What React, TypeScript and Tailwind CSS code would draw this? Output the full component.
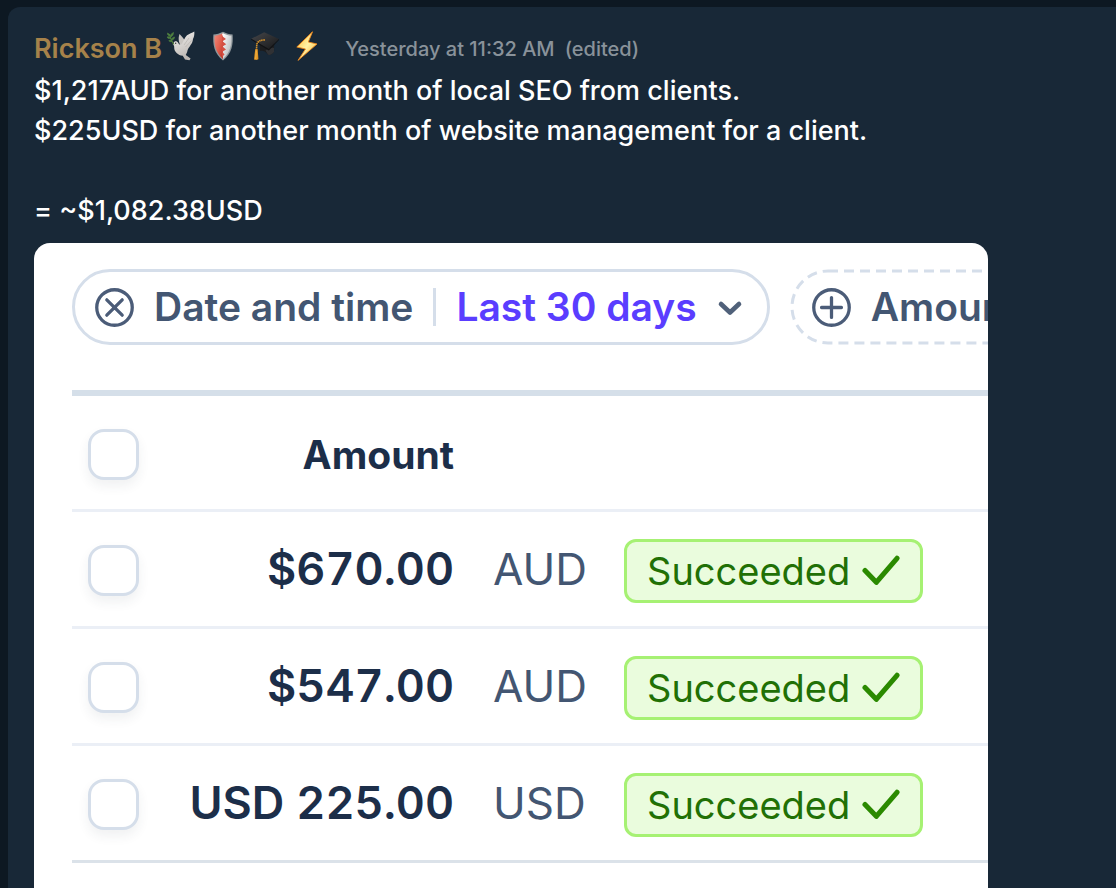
type Payment = {
  amount: string;
  currency: string;
};

const payments: Payment[] = [
  { amount: "$670.00", currency: "AUD" },
  { amount: "$547.00", currency: "AUD" },
  { amount: "USD 225.00", currency: "USD" },
];

const Dove = () => (
  <svg viewBox="0 0 28 30" className="h-[30px] w-7" aria-hidden="true">
    <defs>
      <linearGradient id="dove" x1="0" y1="0" x2="0.4" y2="1">
        <stop offset="0" stopColor="#f4f3f1" />
        <stop offset="1" stopColor="#bdb7b3" />
      </linearGradient>
    </defs>
    <path d="M13.5 14.5 C11 10 11.5 6 12.5 3 C14.5 5 17.5 8 18.5 11 Z" fill="#c9c5c1" />
    <path d="M6.5 12 C7.2 9.8 10.2 9.7 11.3 12 C12.3 13.8 13.5 14 15 12.8 C16.5 10.5 17.5 6.5 20 4.3 C22.5 2.8 25 2 27.3 0.6 C27.6 4 27 6 26 8 C25.6 11 25 12.5 23.6 14 C22.5 16.5 21 17 20.5 19.5 C20.2 21.5 19 23 18.8 24 L23.6 27.5 L22.5 29.3 L18 28.6 L15.8 24.8 C11 24.5 7 20.5 7.2 16.5 C7.3 14.8 6.8 13.8 5.8 13.4 Z" fill="url(#dove)" />
    <path d="M17 14 L22 7 M18.5 16 L24.5 9.5" stroke="#b8b3af" strokeWidth="0.7" />
    <circle cx="8.7" cy="12.2" r="0.7" fill="#333" />
    <path d="M7 13.5 C4.5 10.5 3.5 7 2.5 3" stroke="#4d7a3c" strokeWidth="1.1" fill="none" />
    <path d="M2.8 5 C0.8 4.7 0.2 3.2 0.4 2 C2 2.5 3 3.5 2.8 5 Z M3.7 7.4 C1.7 8 0.6 7.2 0 6 C2 5.4 3.2 6.2 3.7 7.4 Z M3.5 6 C3.2 3.8 4.8 2 6.5 1.4 C6.6 3.5 5.5 5.4 3.5 6 Z M4.6 9 C4.8 7 6 6.2 7.6 6 C7.4 7.8 6.3 8.9 4.6 9 Z M5 10.3 C3.5 11 2.4 10.5 1.8 9.7 C3.2 9 4.4 9.4 5 10.3 Z" fill="#4f8240" stroke="#4f8240" strokeWidth="0.6" />
  </svg>
);

const Shield = () => (
  <svg viewBox="0 0 28 30" className="h-[30px] w-7" aria-hidden="true">
    <defs>
      <linearGradient id="red" x1="0" y1="0" x2="1" y2="1">
        <stop offset="0" stopColor="#f08a7b" />
        <stop offset="0.5" stopColor="#e3604f" />
        <stop offset="1" stopColor="#b93227" />
      </linearGradient>
      <linearGradient id="steel" x1="0" y1="0" x2="1" y2="1">
        <stop offset="0" stopColor="#ffffff" />
        <stop offset="1" stopColor="#a8abad" />
      </linearGradient>
    </defs>
    <path d="M14 0.8 C17 2.4 20.5 3.3 23.6 3.5 C24.4 13 23 22.5 14 29.6 C5 22.5 3.6 13 4.4 3.5 C7.5 3.3 11 2.4 14 0.8 Z" fill="#8e979b" />
    <path d="M14 2.3 C17 3.8 19.8 4.6 22.4 4.8 C23 13.5 21.4 21.5 14 27.9 Z" fill="url(#steel)" />
    <path d="M14 2.3 C11 3.8 8.2 4.6 5.6 4.8 C5 13.5 6.6 21.5 14 27.9 Z" fill="url(#red)" />
    <path d="M13 5 L17 8 L13.5 10.3 L17.2 13.2 L13.5 15.5 L17 18.5 L13.3 20.8 L15.5 23.4 L13 26 Z" fill="#d44f43" />
    <path d="M13 3 L14 2.3 V5.8 Z" fill="#fff" />
  </svg>
);

const GraduationCap = () => (
  <svg viewBox="0 0 28 30" className="h-[30px] w-7" aria-hidden="true">
    <defs>
      <linearGradient id="cap" x1="0" y1="0" x2="1" y2="1">
        <stop offset="0" stopColor="#46474a" />
        <stop offset="1" stopColor="#17181a" />
      </linearGradient>
    </defs>
    <path d="M9 12 L9 20 C12.5 19.2 14.6 20.7 17 23.8 C19.5 24.5 22.4 22.5 23 20.5 L23.3 10.5 Z" fill="#1c1d1f" />
    <path d="M14.5 19.5 C16 17.5 21 16 23.1 17 L23 20.5 C22.4 22.5 19.5 24.5 17 23.8 Z" fill="#303134" />
    <path d="M0.2 7.8 L13.2 1.2 L28 8 L17.8 18 Z" fill="url(#cap)" />
    <path d="M0.2 7.8 L17.8 18 L28 8 V9 L17.8 19.4 L0.2 8.8 Z" fill="#111214" />
    <path d="M14 9 C9.5 8.8 6.3 10.5 5.8 13.5 L5.4 19.5" fill="none" stroke="#d3912b" strokeWidth="1.6" strokeDasharray="1.6 0.5" />
    <path d="M4.2 18.2 H6.7 L7.4 28.2 L5.4 29 L3 28.6 Z" fill="#e09421" />
    <path d="M5.4 19.5 L4.7 28" stroke="#f4bc56" strokeWidth="0.8" />
  </svg>
);

const Bolt = () => (
  <svg viewBox="0 0 28 30" className="h-[30px] w-7" aria-hidden="true">
    <defs>
      <linearGradient id="bolt" x1="0" y1="0" x2="1" y2="1">
        <stop offset="0" stopColor="#fcb92d" />
        <stop offset="0.5" stopColor="#fff2a6" />
        <stop offset="1" stopColor="#f9a51c" />
      </linearGradient>
    </defs>
    <path d="M19.5 0.8 L3.8 16 L12.5 18 L5 29.4 L24 13 L15.3 11 Z" fill="url(#bolt)" stroke="#f0891b" strokeWidth="0.9" strokeLinejoin="round" />
  </svg>
);

const Header = () => (
  <header className="flex h-11 items-center whitespace-nowrap">
    <h1 className="text-[27px] font-semibold text-[#a6824a]">Rickson B</h1>
    <div className="ml-[5px] flex gap-3.5 pb-1.5">
      <Dove />
      <Shield />
      <GraduationCap />
      <Bolt />
    </div>
    <p className="ml-6 flex gap-2.5 text-[20px] font-medium text-[#89929a]">
      <time>Yesterday at 11:32 AM</time>
      <span>(edited)</span>
    </p>
  </header>
);

const Filters = () => (
  <div className="flex gap-5 whitespace-nowrap text-[39px] font-semibold text-[#435672]">
    <div className="flex h-[76px] shrink-0 items-center rounded-full border-3 border-[#d5deea] pr-6 pl-5">
      <button type="button" aria-label="Remove date filter">
        <svg viewBox="0 0 38 38" className="size-[39px]" fill="none" stroke="#4b5c78" strokeWidth="3.2" strokeLinecap="round">
          <circle cx="19" cy="19" r="17.3" />
          <path d="M11.5 11.5 L26.5 26.5 M26.5 11.5 L11.5 26.5" />
        </svg>
      </button>
      <span className="ml-5">Date and time</span>
      <span className="mx-5 h-[38px] w-[3px] bg-[#d5deea]"></span>
      <button type="button" className="flex items-center gap-5 text-[#5a3dff]">
        Last 30 days
        <svg viewBox="0 0 26 20" className="h-5 w-[26px]" fill="none" stroke="#50617a" strokeWidth="4.6" strokeLinecap="round" strokeLinejoin="round">
          <path d="M4 7 L13 15.5 L22 7" />
        </svg>
      </button>
    </div>
    <button type="button" className="relative flex h-[76px] shrink-0 items-center gap-5 pr-8 pl-[22px]">
      <svg className="absolute inset-0 size-full overflow-visible p-[2px]" fill="none" aria-hidden="true">
        <rect width="100%" height="100%" rx="36" stroke="#d5deea" strokeWidth="3" strokeDasharray="10 6" />
      </svg>
      <svg viewBox="0 0 38 38" className="size-[39px]" fill="none" stroke="#4b5c78" strokeWidth="3.2" strokeLinecap="round">
        <circle cx="19" cy="19" r="17.3" />
        <path d="M19 9.3 V28.7 M9.3 19 H28.7" />
      </svg>
      Amount
    </button>
  </div>
);

const Checkbox = (props: { label: string }) => (
  <input
    type="checkbox"
    aria-label={props.label}
    className="ml-4 block size-[51px] appearance-none rounded-2xl border-3 border-[#d5deea] bg-white shadow-[0_6px_12px_rgba(40,50,70,0.07)]"
  />
);

const Succeeded = () => (
  <span className="inline-flex h-16 items-center gap-3 rounded-xl border-3 border-[#a6f173] bg-[#eafcdd] px-5 align-middle text-[38px] text-[#217005]">
    Succeeded
    <svg viewBox="0 0 40 34" className="h-8 w-[38px]" fill="none" stroke="#2b8a00" strokeWidth="5.4">
      <path d="M3 16.5 L15 29 L37 3.5" strokeLinejoin="round" strokeLinecap="round" />
    </svg>
  </span>
);

const PaymentTable = () => (
  <table className="mt-[45px] w-full table-fixed border-collapse whitespace-nowrap text-[44px] leading-none text-[#1c2e49] tabular-nums">
    <colgroup>
      <col className="w-[84px]" />
      <col className="w-[298px]" />
      <col className="w-[170px]" />
      <col />
    </colgroup>
    <thead>
      <tr className="h-[117px] border-t-6 border-b-3 border-t-[#d5dfe9] border-b-[#ebeff6]">
        <th className="p-0 pt-1">
          <Checkbox label="Select all payments" />
        </th>
        <th className="p-0 pt-1 text-right text-[39px] font-bold">Amount</th>
        <th className="p-0"></th>
        <th className="p-0"></th>
      </tr>
    </thead>
    <tbody>
      {payments.map((payment) => (
        <tr key={payment.amount} className="h-[117px] border-b-3 border-[#ebeff6] last:border-[#dbe2e9]">
          <td className="p-0 pt-1">
            <Checkbox label={`Select ${payment.amount}`} />
          </td>
          <td className="p-0 text-right text-[45px] font-semibold">{payment.amount}</td>
          <td className="p-0 pl-[39px] text-[#435672]">{payment.currency}</td>
          <td className="p-0 pt-1">
            <Succeeded />
          </td>
        </tr>
      ))}
    </tbody>
  </table>
);

const App = () => {
  return (
    <div className="h-screen overflow-hidden bg-[#0d1822] pt-[7px] pl-2 font-['Inter','Liberation_Sans',sans-serif]">
      <main className="min-h-full rounded-tl-xl bg-[#182837] pt-5 pl-[26px]">
        <Header />
        <div className="text-[27px] leading-10 font-medium text-white">
          <p>$1,217AUD for another month of local SEO from clients.</p>
          <p>$225USD for another month of website management for a client.</p>
          <p className="mt-10">= ~$1,082.38USD</p>
        </div>
        <section className="mt-3 w-full max-w-[954px] overflow-hidden rounded-2xl bg-white pt-[26px] pb-10 pl-[38px]">
          <Filters />
          <PaymentTable />
        </section>
      </main>
    </div>
  );
};

export default App;
